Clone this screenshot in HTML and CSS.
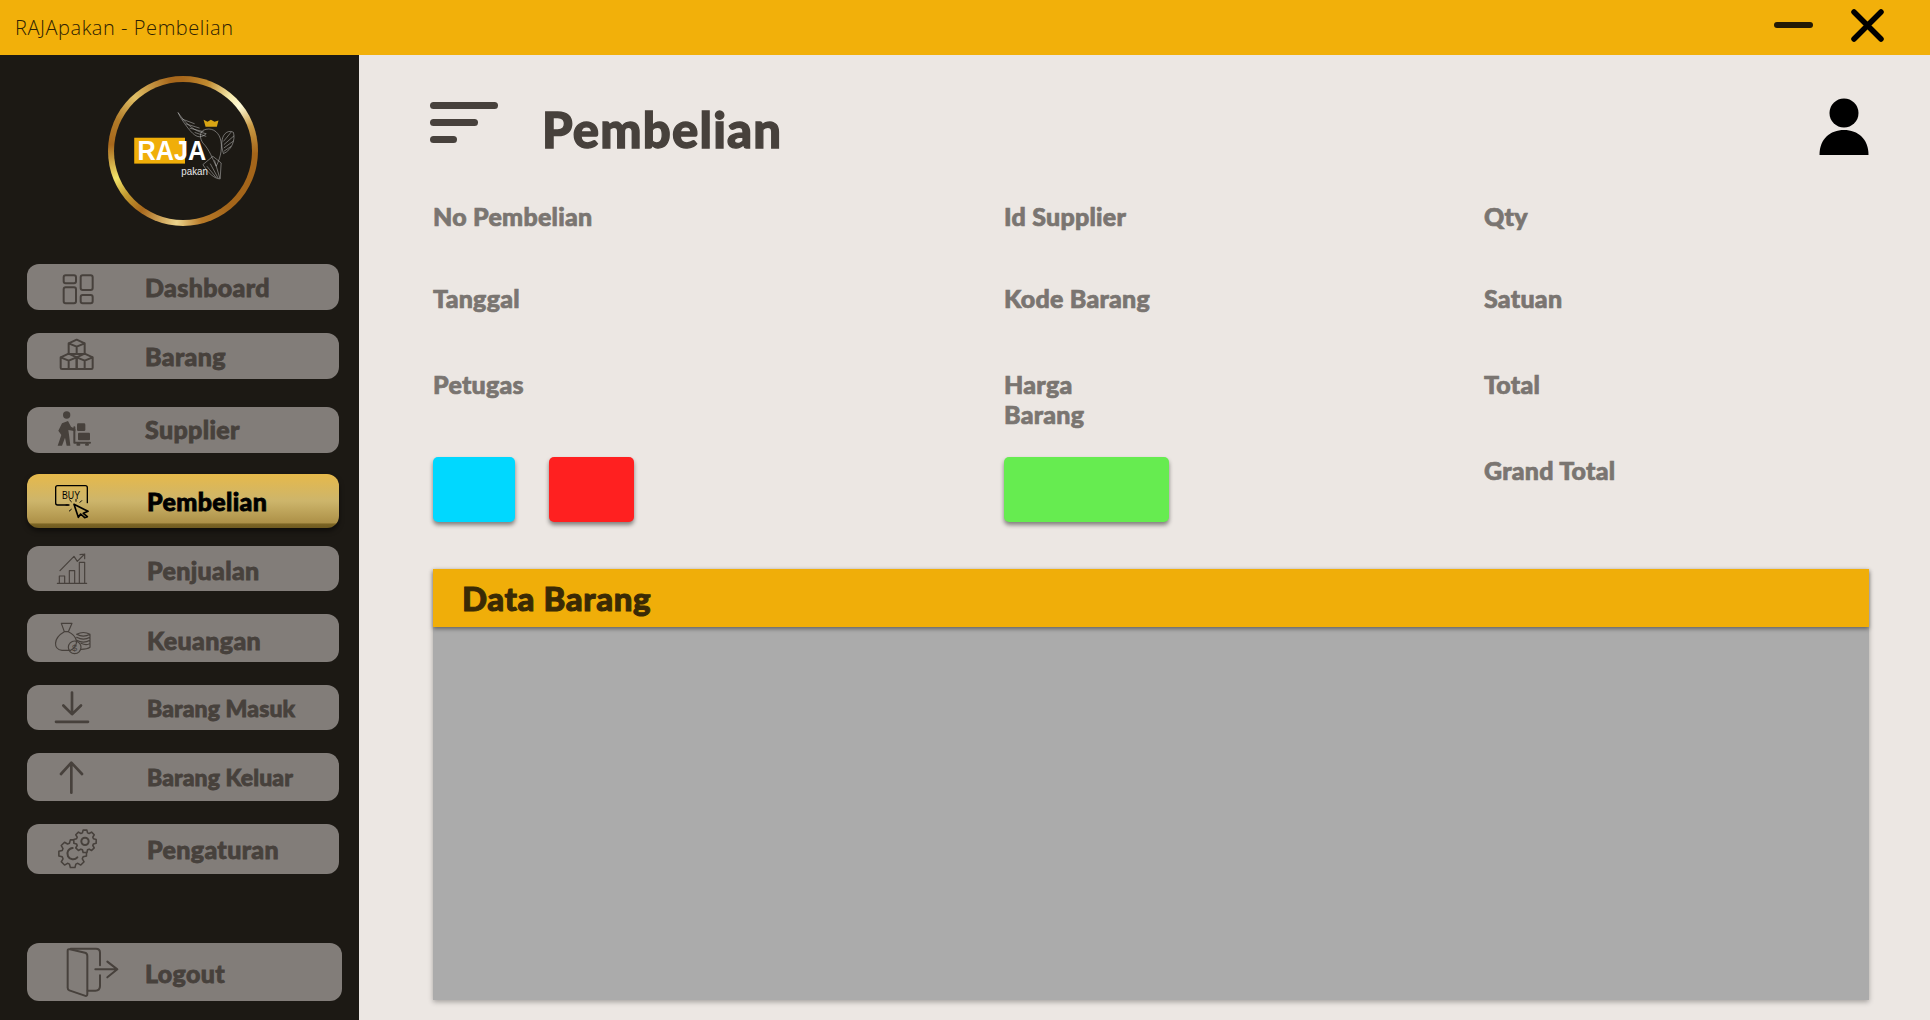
FILE: index.html
```html
<!DOCTYPE html>
<html lang="id">
<head>
<meta charset="utf-8">
<title>RAJApakan - Pembelian</title>
<link rel="stylesheet" href="styles.css">
</head>
<body>
<div class="app">
  <header class="titlebar">
    <span class="titlebar-text">RAJApakan - Pembelian</span>
    <span class="win-min"></span>
    <svg class="win-close" viewBox="0 0 33 33"><path d="M3 3L30 30M30 3L3 30"/></svg>
  </header>
  <div class="body-row">
    <aside class="sidebar">
      <div class="logo">
        <svg class="logo-art" viewBox="324 228 452 452">
          <rect x="403" y="414" width="153" height="78" fill="#f0ae09"/>
          <g fill="none" stroke="#d4d4d4" stroke-width="1.4">
            <path d="M535 338C560 375 585 395 620 402C600 420 585 410 565 385C550 365 540 350 535 338Z"/>
            <path d="M548 358L585 372M558 372L600 385M570 385L612 396M585 398L620 410"/>
            <path d="M610 392C635 380 655 395 662 415C670 440 665 470 650 500C640 480 630 450 610 430C600 415 600 400 610 392Z"/>
            <path d="M668 420C672 398 690 390 702 398C708 420 698 450 672 462C668 450 665 435 668 420Z"/>
            <path d="M672 425L696 396M673 435L704 408M673 445L702 424M673 455L695 440"/>
            <path d="M610 495L640 470L665 490L662 538C645 538 625 520 610 495Z"/>
            <path d="M622 500L650 534M632 492L656 536M645 482L661 536"/>
          </g>
          <path d="M612 360L624 366L634 360L645 366L657 362L652 381H618Z" fill="#d9a514"/>
          <text class="logo-raja" x="413" y="482" textLength="207" lengthAdjust="spacingAndGlyphs">RAJA</text>
          <text class="logo-pakan" x="545" y="526" textLength="80" lengthAdjust="spacingAndGlyphs">pakan</text>
        </svg>
      </div>
      <nav class="nav">
        <a class="nav-item item-dashboard">
          <svg class="nav-icon" viewBox="150 771 216 180"><rect x="191" y="826" width="37" height="24" rx="6"/><rect x="242" y="826" width="36" height="44" rx="6"/><rect x="191" y="862" width="37" height="48" rx="6"/><rect x="242" y="885" width="36" height="25" rx="6"/></svg>
          <span class="nav-label label-tight">Dashboard</span>
        </a>
        <a class="nav-item item-barang">
          <svg class="nav-icon" viewBox="150 978 216 180"><path d="M206 1030L230 1019L254 1030V1062H206ZM206 1030L230 1040L254 1030M230 1040V1062"/><path d="M182 1072L206 1061L230 1072V1107H186Q182 1107 182 1103ZM182 1072L206 1082L230 1072M206 1082V1107"/><path d="M230 1072L254 1061L278 1072V1103Q278 1107 274 1107H230ZM230 1072L254 1082L278 1072M254 1082V1107"/></svg>
          <span class="nav-label label-tight">Barang</span>
        </a>
        <a class="nav-item item-supplier">
          <svg class="nav-icon" viewBox="150 30 216 180"><circle class="solid" cx="200" cy="75" r="11"/><path class="solid" d="M186 100L204 93L213 110L226 117V124L205 120L208 142L211 167H200L195 143L186 167H173L184 135L175 122Z"/><rect class="solid" x="231" y="100" width="25" height="23" rx="4"/><rect class="solid" x="234" y="128" width="36" height="23" rx="3"/><path d="M223 112V158H270M232 164H238M258 164H264"/></svg>
          <span class="nav-label label-tight label-raise">Supplier</span>
        </a>
        <a class="nav-item nav-item-active item-pembelian">
          <svg class="nav-icon icon-active" viewBox="150 243 216 180"><path d="M205 345H173Q167 345 167 339V293Q167 287 173 287H256Q262 287 262 293V338"/><text class="buy-text" x="186" y="327" textLength="54" lengthAdjust="spacingAndGlyphs">BUY</text><path class="cursor" d="M222 343L264 364L250 370L262 380L254 383L242 372L235 382Z"/><path class="sparks" d="M208 345H198M214 335L209 330M228 334V328M240 337L245 332M214 358L208 363"/></svg>
          <span class="nav-label">Pembelian</span>
        </a>
        <a class="nav-item item-penjualan">
          <svg class="nav-icon icon-thin" viewBox="150 445 216 180"><path d="M178 578V556H194V578M208 578V540H224V578M238 578V515H254V578M172 578H260"/><path d="M180 540L222 497L232 512L254 490M240 492L254 490L254 504"/></svg>
          <span class="nav-label label-low">Penjualan</span>
        </a>
        <a class="nav-item item-keuangan">
          <svg class="nav-icon icon-thin" viewBox="150 654 216 180"><path d="M184 700H216L205 725C232 738 240 765 212 781H186C160 778 158 745 193 725ZM193 725H205"/><circle cx="224" cy="772" r="19"/><text class="coin-text" x="224" y="782">$</text><path d="M230 733Q250 722 270 733V772Q262 778 243 778M230 733Q250 744 270 733M230 742Q250 753 270 742M230 751Q250 762 270 751M243 760Q260 768 270 760"/></svg>
          <span class="nav-label label-lower">Keuangan</span>
        </a>
        <a class="nav-item item-masuk">
          <svg class="nav-icon icon-bold" viewBox="150 -67.5 216 180"><path d="M216 -24V40M190 15L216 41L243 15M168 64H264"/></svg>
          <span class="nav-label label-small">Barang Masuk</span>
        </a>
        <a class="nav-item item-keluar">
          <svg class="nav-icon icon-bold" viewBox="150 141 216 180"><path d="M214 278V190M183 222L214 188L246 222"/></svg>
          <span class="nav-label label-small">Barang Keluar</span>
        </a>
        <a class="nav-item item-pengaturan">
          <svg class="nav-icon" viewBox="150 357 216 180">
            <path transform="translate(218 461) scale(.42)" stroke-width="11" d="M74.600 -22.800L98.600 -16.500L98.600 16.500L74.600 22.800L68.900 36.600L81.400 58L58 81.400L36.600 68.900L22.800 74.600L16.500 98.600L-16.500 98.600L-22.800 74.600L-36.600 68.900L-58 81.400L-81.400 58L-68.900 36.600L-74.600 22.800L-98.600 16.500L-98.600 -16.500L-74.600 -22.800L-68.900 -36.600L-81.400 -58L-58 -81.400L-36.600 -68.900L-22.800 -74.600L-16.500 -98.600L16.500 -98.600L22.800 -74.600L36.600 -68.900L58 -81.400L81.400 -58L68.900 -36.600Z"/>
            <path class="gear-top" transform="translate(255 424) scale(.34)" stroke-width="14" d="M74.600 -22.800L98.600 -16.500L98.600 16.500L74.600 22.800L68.900 36.600L81.400 58L58 81.400L36.600 68.900L22.800 74.600L16.500 98.600L-16.500 98.600L-22.800 74.600L-36.600 68.900L-58 81.400L-81.400 58L-68.900 36.600L-74.600 22.800L-98.600 16.500L-98.600 -16.500L-74.600 -22.800L-68.900 -36.600L-81.400 -58L-58 -81.400L-36.600 -68.900L-22.800 -74.600L-16.500 -98.600L16.500 -98.600L22.800 -74.600L36.600 -68.900L58 -81.400L81.400 -58L68.900 -36.600Z"/>
            <circle cx="255" cy="424" r="11"/>
            <path d="M232 472A17 17 0 1 1 218 444"/>
          </svg>
          <span class="nav-label">Pengaturan</span>
        </a>
        <a class="nav-item item-logout">
          <svg class="nav-icon" viewBox="150 726 216 180"><path d="M212 746H288Q300 746 300 758V796M300 826V858Q300 872 286 872H263"/><path d="M203 752Q203 746 210 748L255 758Q262 760 262 768V882Q262 890 254 887L208 871Q203 869 203 863Z"/><path d="M286 808H350M322 785L352 808L322 832"/></svg>
          <span class="nav-label label-tight label-low">Logout</span>
        </a>
      </nav>
    </aside>
    <main class="main">
      <div class="page-header">
        <div class="burger"><span class="burger-a"></span><span class="burger-b"></span><span class="burger-c"></span></div>
        <h1 class="page-title">Pembelian</h1>
        <svg class="user-icon" viewBox="0 0 50 57"><circle cx="25" cy="15" r="14.500"/><path d="M0.500 57C0.500 41 11 32 25 32S49.500 41 49.500 57Z"/></svg>
      </div>
      <section class="form">
        <div class="field">No Pembelian</div>
        <div class="field">Id Supplier</div>
        <div class="field">Qty</div>
        <div class="field">Tanggal</div>
        <div class="field">Kode Barang</div>
        <div class="field">Satuan</div>
        <div class="field">Petugas</div>
        <div class="field">Harga<br>Barang</div>
        <div class="field">Total</div>
        <div class="actions"><button class="btn btn-cyan"></button><button class="btn btn-red"></button></div>
        <div class="actions"><button class="btn btn-green"></button></div>
        <div class="field">Grand Total</div>
      </section>
      <section class="panel">
        <div class="panel-head"><h2 class="panel-title">Data Barang</h2></div>
        <div class="panel-body"></div>
      </section>
    </main>
  </div>
</div>
</body>
</html>
```

FILE: styles.css
```css
* { box-sizing: border-box; }
html, body { margin: 0; padding: 0; height: 100%; overflow: hidden; }
body { font-family: "Lato", "Open Sans", sans-serif; background: #ece7e3; }
.app { display: flex; flex-direction: column; width: 1930px; height: 1020px; }

.titlebar { height: 55px; flex: none; display: flex; align-items: center; background: #f2b00a; padding-left: 15px; }
.titlebar-text { font-family: "Open Sans", sans-serif; font-weight: 300; font-size: 20px; letter-spacing: .55px; color: #2e2104; }
.win-min { width: 39px; height: 6px; border-radius: 3px; background: #241a05; margin-left: auto; margin-bottom: 5px; }
.win-close { width: 33px; height: 33px; margin: 0 46px 4px 38px; fill: none; stroke: #000; stroke-width: 5.5; stroke-linecap: round; }

.body-row { flex: 1; display: flex; min-height: 0; }

.sidebar { width: 359px; flex: none; background: #1c1914; padding: 21px 0 0 27px; }
.logo { position: relative; width: 150px; height: 150px; margin-left: 81px; border-radius: 50%;
  background: conic-gradient(from 0deg, #a8681c 0deg, #c08a30 20deg, #f4e8a8 40deg, #fffbd8 52deg, #c99a44 70deg, #a4651a 92deg, #a4651a 140deg, #b87a28 165deg, #ecd48c 185deg, #a8681c 215deg, #c29a30 232deg, #f2e36a 248deg, #a8681c 275deg, #b07a28 295deg, #e0bf66 318deg, #a8681c 350deg, #a8681c 360deg); }
.logo::after { content: ""; position: absolute; inset: 6px; border-radius: 50%; background: #1c1914; }
.logo-art { position: absolute; inset: 0; width: 150px; height: 150px; z-index: 1; }
.logo-raja { font-family: "Liberation Sans", sans-serif; font-weight: 700; font-size: 86px; fill: #fff; }
.logo-pakan { font-family: "Liberation Sans", sans-serif; font-size: 34px; fill: #e8e8e8; }

.nav { display: flex; flex-direction: column; margin-top: 38px; }
.nav-item { display: flex; align-items: center; width: 312px; padding-left: 23px; background: #827d79; border-radius: 12px; color: #47413c; }
.nav-icon { width: 72px; height: 60px; flex: none; overflow: visible; fill: none; stroke: #47413c; stroke-width: 6; stroke-linecap: round; stroke-linejoin: round; }
.nav-icon .solid { fill: #47413c; stroke: none; }
.icon-thin { stroke-width: 3.5; }
.icon-bold { stroke-width: 8; }
.icon-active { stroke: #000; stroke-width: 4; }
.icon-active .cursor { stroke-width: 5; }
.icon-active .sparks { stroke-width: 3; }
.gear-top { fill: #827d79; }
.buy-text { font-family: "Liberation Sans", sans-serif; font-size: 32px; fill: #000; stroke: none; }
.coin-text { font-family: "Liberation Sans", sans-serif; font-size: 28px; fill: #47413c; stroke: none; text-anchor: middle; }
.nav-label { font-weight: 900; font-size: 25px; line-height: 30px; margin-left: 25px; white-space: nowrap; letter-spacing: .35px; -webkit-text-stroke: .8px currentColor; }
.label-tight { margin-left: 23px; }
.label-small { font-size: 23px; letter-spacing: .1px; }
.label-raise { margin-top: -2px; }
.label-low { margin-top: 2px; }
.label-lower { margin-top: 4px; }

.item-dashboard { height: 46px; }
.item-barang { height: 46px; margin-top: 23px; }
.item-supplier { height: 46px; margin-top: 28px; }
.item-pembelian { height: 54px; margin-top: 21px; }
.item-penjualan { height: 45px; margin-top: 18px; }
.item-keuangan { height: 48px; margin-top: 23px; }
.item-masuk { height: 45px; margin-top: 23px; }
.item-keluar { height: 48px; margin-top: 23px; }
.item-pengaturan { height: 50px; margin-top: 23px; }
.item-logout { height: 58px; margin-top: 69px; width: 315px; }

.nav-item-active { background: linear-gradient(#e6b94b 0%, #cdb56b 50%, #ad9148 90%, #7b6424 93%, #6e5a20 100%); color: #000; box-shadow: 0 3px 5px rgba(0,0,0,.5); }

.main { flex: 1; min-width: 0; padding: 0 61px 0 74px; display: flex; flex-direction: column; }
.page-header { height: 146px; flex: none; display: flex; align-items: flex-start; }
.burger { display: flex; flex-direction: column; gap: 10px; width: 68px; margin: 47px 0 0 -3px; }
.burger span { display: block; height: 7px; border-radius: 4px; background: #47413c; }
.burger-a { width: 68px; }
.burger-b { width: 48px; }
.burger-c { width: 27px; }
.page-title { margin: 44px 0 0 44px; font-weight: 900; font-size: 49px; line-height: 60px; letter-spacing: 1.2px; color: #47413c; -webkit-text-stroke: 1.3px currentColor; }
.user-icon { width: 50px; height: 57px; margin: 43px 0 0 auto; fill: #000; }

.form { display: grid; grid-template-columns: 571px 480px 1fr; grid-template-rows: 82px 86px 86px 114px; flex: none; }
.field { font-weight: 900; font-size: 25px; line-height: 30px; letter-spacing: .25px; color: #7a7571; -webkit-text-stroke: .7px currentColor; }
.actions { display: flex; gap: 34px; align-items: flex-start; padding-top: 2px; }
.btn { height: 65px; border: 0; padding: 0; border-radius: 5px; box-shadow: 0 3px 4px rgba(0,0,0,.45); }
.btn-cyan { width: 82px; background: #00d8ff; }
.btn-red { width: 85px; background: #ff2020; }
.btn-green { width: 165px; background: #66ec50; }

.panel { flex: none; height: 431px; display: flex; flex-direction: column; box-shadow: 0 2px 5px rgba(0,0,0,.3); }
.panel-head { height: 58px; flex: none; background: #f0ae09; padding-left: 29px; display: flex; align-items: center; box-shadow: 0 2px 4px rgba(0,0,0,.4); z-index: 1; }
.panel-title { margin: 0; font-weight: 900; font-size: 33px; line-height: 40px; letter-spacing: .6px; color: #3a2a05; -webkit-text-stroke: 1px currentColor; }
.panel-body { flex: 1; background: #ababab; }
```
